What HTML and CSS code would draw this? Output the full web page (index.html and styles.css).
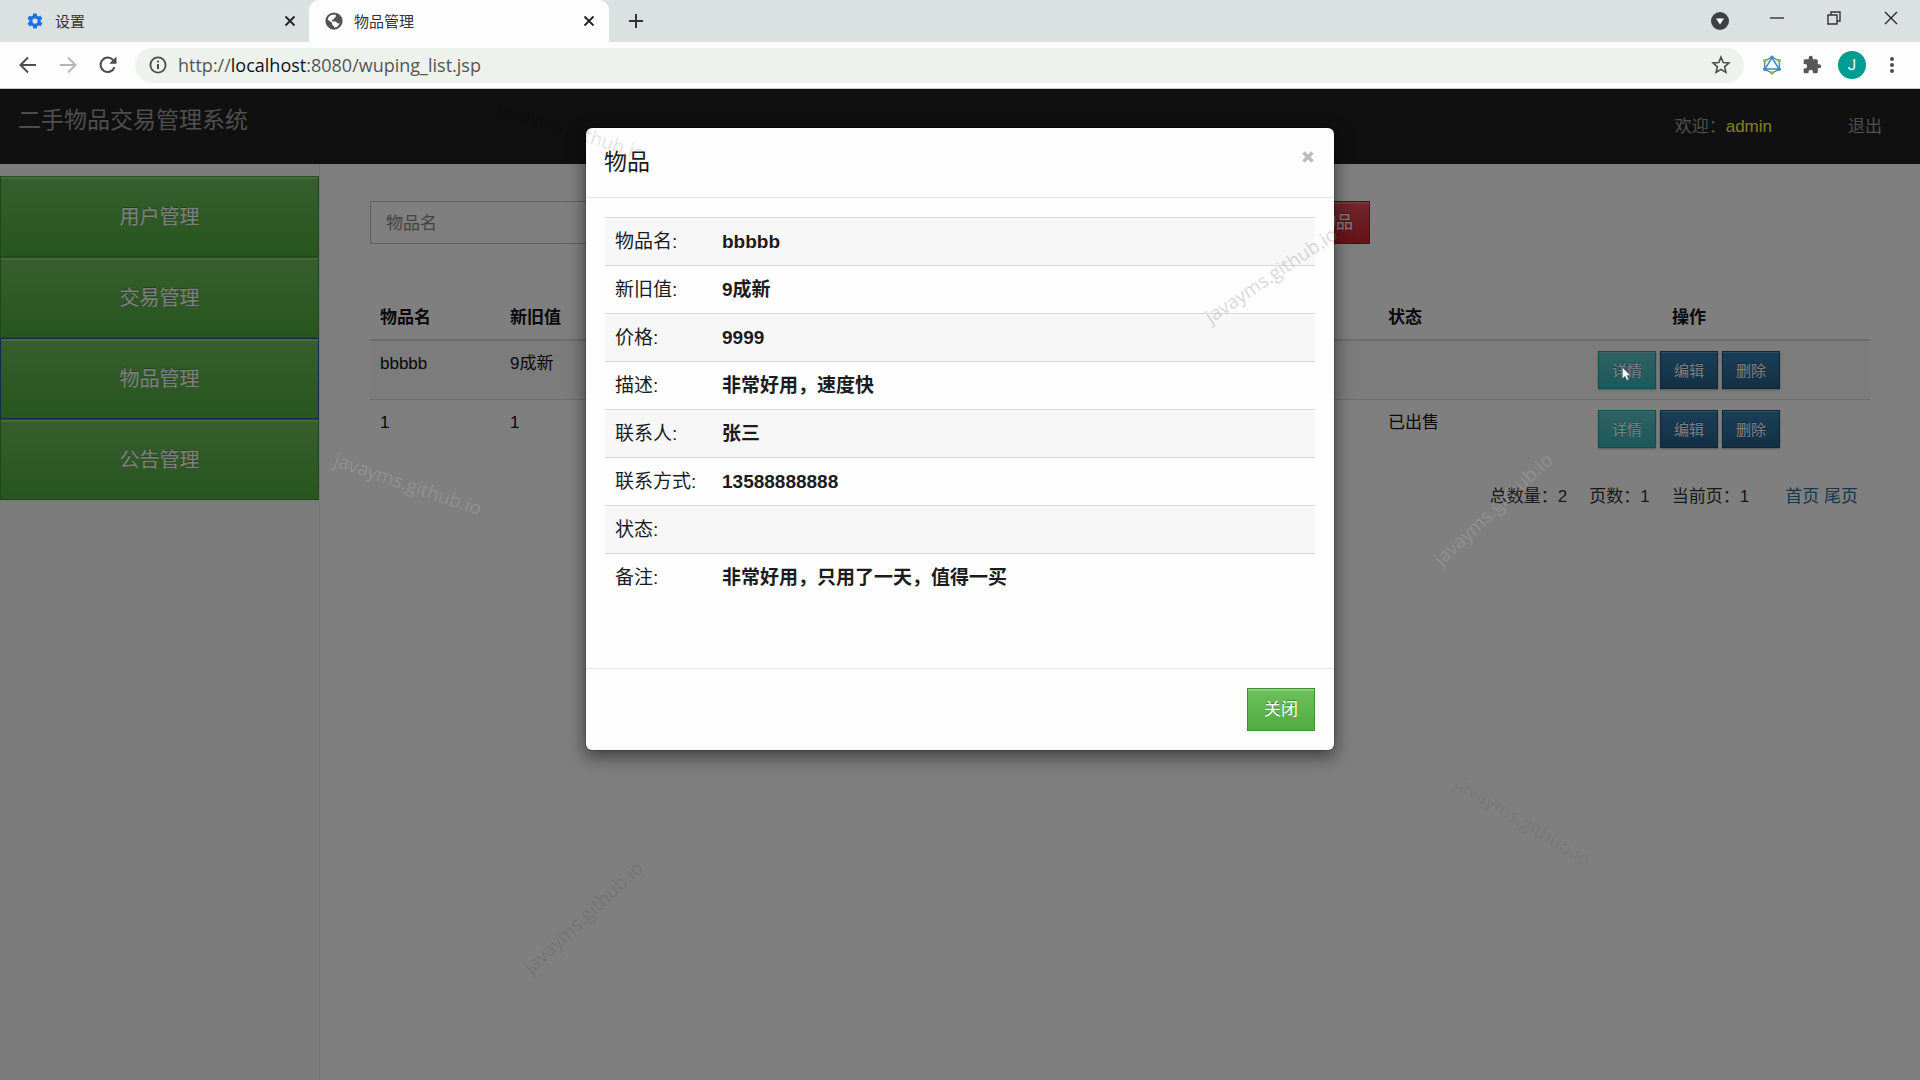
FILE: index.html
```
<!DOCTYPE html>
<html lang="zh-CN">
<head>
<meta charset="utf-8">
<meta name="viewport" content="width=device-width, initial-scale=1">
<title>物品管理</title>
<link rel="stylesheet" href="styles.css">
</head>
<body>
<header class="browser">
  <div class="tabstrip">
    <div class="tab">
      <svg class="tab-icon" viewBox="0 0 24 24" fill="#1a73e8"><path d="M19.4 13c0-.3.1-.6.1-1s0-.7-.1-1l2.100-1.600c.2-.2.2-.4.1-.6l-2-3.500c-.1-.2-.4-.3-.6-.2l-2.500 1c-.5-.4-1.100-.7-1.700-1l-.4-2.600c0-.2-.2-.4-.5-.4h-4c-.2 0-.5.2-.5.4l-.4 2.600c-.6.300-1.200.6-1.700 1l-2.500-1c-.2-.1-.5 0-.6.2l-2 3.500c-.1.200-.1.500.1.600L4.500 11c0 .3-.1.600-.1 1s0 .7.100 1l-2.100 1.600c-.2.200-.2.400-.1.600l2 3.500c.1.200.400.300.6.200l2.500-1c.5.400 1.100.700 1.700 1l.4 2.600c0 .2.200.400.5.400h4c.2 0 .5-.2.5-.4l.4-2.600c.6-.300 1.200-.6 1.700-1l2.500 1c.2.100.5 0 .6-.2l2-3.500c.1-.2.100-.5-.1-.6L19.400 13zM12 15.500a3.500 3.500 0 1 1 0-7 3.500 3.500 0 0 1 0 7z"/></svg>
      <span class="tab-title">设置</span>
      <button class="tab-close" aria-label="关闭标签页"><svg viewBox="0 0 12 12" width="12" height="12"><path d="M1.500 1.500l9 9M10.500 1.500l-9 9" stroke="#222" stroke-width="1.800"/></svg></button>
    </div>
    <div class="tab tab-active">
      <svg class="tab-icon" viewBox="0 0 24 24"><circle cx="12" cy="12" r="11.500" fill="#505355"/><path d="M10 3.500h4.500v2.200c0 1.500-1.200 2.300-2.500 2.300v2H9.500v2.500h4c1.500 0 2.500 1 2.500 2.500h3.500c-1 3.500-4 5.800-7.500 5.800v-2.300c-1.500 0-2.500-1-2.500-2.500v-1.500L3.500 10C4.300 6.500 7 4 10 3.500z" fill="#fdfdfd"/></svg>
      <span class="tab-title">物品管理</span>
      <button class="tab-close" aria-label="关闭标签页"><svg viewBox="0 0 12 12" width="12" height="12"><path d="M1.500 1.500l9 9M10.500 1.500l-9 9" stroke="#222" stroke-width="1.800"/></svg></button>
    </div>
    <button class="new-tab" aria-label="新标签页"><svg viewBox="0 0 16 16" width="16" height="16"><path d="M8 1v14M1 8h14" stroke="#333" stroke-width="2"/></svg></button>
    <div class="window-controls">
      <button class="tab-search" aria-label="搜索标签页"><svg viewBox="0 0 18 18" width="18" height="18"><circle cx="9" cy="9" r="9" fill="#3c4043"/><path d="M5 6.500h8L9 12.500z" fill="#fff"/></svg></button>
      <button aria-label="最小化"><svg viewBox="0 0 14 14" width="14" height="14"><path d="M0 7h14" stroke="#333" stroke-width="1.400"/></svg></button>
      <button aria-label="还原"><svg viewBox="0 0 14 14" width="14" height="14" fill="none" stroke="#333" stroke-width="1.400"><path d="M1 4h9v9H1zM4 4V1h9v9h-3"/></svg></button>
      <button aria-label="关闭窗口"><svg viewBox="0 0 14 14" width="14" height="14"><path d="M1 1l12 12M13 1L1 13" stroke="#222" stroke-width="1.300"/></svg></button>
    </div>
  </div>
  <div class="toolbar">
    <div class="nav-buttons">
      <button aria-label="后退"><svg viewBox="0 0 20 20" width="20" height="20" fill="none" stroke="#4a4d50" stroke-width="2"><path d="M18 10H3M10 2.500L2.500 10l7.500 7.500"/></svg></button>
      <button aria-label="前进"><svg viewBox="0 0 20 20" width="20" height="20" fill="none" stroke="#b4b6b8" stroke-width="2"><path d="M2 10h15M10 2.500l7.500 7.500-7.500 7.500"/></svg></button>
      <button aria-label="重新加载"><svg viewBox="0 0 20 20" width="20" height="20"><path d="M16.500 12.200A7.200 7.200 0 1 1 15 4.900l1.800 1.800" fill="none" stroke="#4a4d50" stroke-width="2"/><path d="M18.500 1.500v7.300h-7.300z" fill="#4a4d50"/></svg></button>
    </div>
    <div class="omnibox">
      <svg viewBox="0 0 18 18" width="18" height="18"><circle cx="9" cy="9" r="7.600" fill="none" stroke="#4a4d50" stroke-width="1.800"/><path d="M9 8v5M9 4.800v1.800" stroke="#4a4d50" stroke-width="2"/></svg>
      <span class="url">http://<span class="url-host">localhost</span>:8080/wuping_list.jsp</span>
      <button aria-label="收藏"><svg viewBox="0 0 20 20" width="20" height="20"><path d="M10 2.200l2.200 5.300 5.700.5-4.300 3.800 1.300 5.600L10 14.400l-4.900 3 1.300-5.600L2.100 8l5.700-.5z" fill="none" stroke="#4a4d50" stroke-width="1.600"/></svg></button>
    </div>
    <div class="extensions">
      <button aria-label="扩展"><svg viewBox="0 0 20 20" width="20" height="20"><path d="M10 2l7.300 4v8.200L10 18l-7.300-3.800V6z" fill="none" stroke="#666" stroke-width="1.200"/><path d="M10 2.500L17 14H3z" fill="none" stroke="#2b8fd0" stroke-width="1.500"/><g fill="#2b8fd0"><circle cx="10" cy="2" r="1.600"/><circle cx="2.800" cy="14.200" r="1.800"/><circle cx="17.200" cy="14.200" r="1.800"/></g><g fill="#76c043"><circle cx="2.800" cy="5.800" r="1.800"/><circle cx="17.200" cy="5.800" r="1.800"/><circle cx="10" cy="18" r="1.800"/></g></svg></button>
      <button aria-label="扩展程序"><svg viewBox="0 0 24 24" width="20" height="20" fill="#54585b"><path d="M20.500 11H19V7a2 2 0 0 0-2-2h-4V3.500a2.500 2.500 0 0 0-5 0V5H4a2 2 0 0 0-2 2v3.800h1.500a2.700 2.700 0 0 1 0 5.400H2V20c0 1.100.9 2 2 2h3.800v-1.500a2.700 2.700 0 0 1 5.400 0V22H17a2 2 0 0 0 2-2v-4h1.500a2.500 2.500 0 0 0 0-5z"/></svg></button>
      <button class="avatar" aria-label="用户">J</button>
      <button aria-label="更多"><svg viewBox="0 0 4 18" width="4" height="18" fill="#4a4d50"><circle cx="2" cy="3" r="2"/><circle cx="2" cy="9" r="2"/><circle cx="2" cy="15" r="2"/></svg></button>
    </div>
  </div>
</header>

<div class="page">
  <nav class="navbar">
    <a class="brand" href="#">二手物品交易管理系统</a>
    <div class="nav-right">
      <span>欢迎：<span class="user">admin</span></span>
      <a href="#">退出</a>
    </div>
  </nav>
  <div class="content">
    <aside class="sidebar">
      <button class="menu-btn">用户管理</button>
      <button class="menu-btn">交易管理</button>
      <button class="menu-btn menu-current">物品管理</button>
      <button class="menu-btn">公告管理</button>
    </aside>
    <main class="main">
      <form class="search">
        <input class="search-input" type="text" placeholder="物品名" aria-label="物品名">
        <button class="btn btn-danger" type="button">添加物品</button>
      </form>
      <table class="items">
        <colgroup><col class="c-name"><col class="c-name"><col><col class="c-name"><col class="c-ops"></colgroup>
        <thead><tr><th>物品名</th><th>新旧值</th><th></th><th>状态</th><th class="ops">操作</th></tr></thead>
        <tbody>
          <tr><td>bbbbb</td><td>9成新</td><td></td><td></td><td class="ops"><div class="ops-row"><button class="btn-sm btn-info">详情</button><button class="btn-sm btn-primary">编辑</button><button class="btn-sm btn-primary">删除</button></div></td></tr>
          <tr><td>1</td><td>1</td><td></td><td>已出售</td><td class="ops"><div class="ops-row"><button class="btn-sm btn-info">详情</button><button class="btn-sm btn-primary">编辑</button><button class="btn-sm btn-primary">删除</button></div></td></tr>
        </tbody>
      </table>
      <div class="pager">
        <span>总数量：2</span><span>页数：1</span><span>当前页：1</span>
        <span class="pager-links"><a href="#">首页</a> <a href="#">尾页</a></span>
      </div>
    </main>
  </div>

  <div class="overlay">
    <div class="modal" role="dialog" aria-labelledby="modal-title">
      <div class="modal-head">
        <h4 id="modal-title">物品</h4>
        <button class="modal-x" aria-label="关闭"><svg viewBox="0 0 12 12" width="12" height="12"><path d="M1.500 1.500l9 9M10.500 1.500l-9 9" stroke="#bdbdbd" stroke-width="3.400"/></svg></button>
      </div>
      <div class="modal-body">
        <table class="detail">
          <tr><td>物品名:</td><th>bbbbb</th></tr>
          <tr><td>新旧值:</td><th>9成新</th></tr>
          <tr><td>价格:</td><th>9999</th></tr>
          <tr><td>描述:</td><th>非常好用，速度快</th></tr>
          <tr><td>联系人:</td><th>张三</th></tr>
          <tr><td>联系方式:</td><th>13588888888</th></tr>
          <tr><td>状态:</td><th></th></tr>
          <tr><td>备注:</td><th>非常好用，只用了一天，值得一买</th></tr>
        </table>
      </div>
      <div class="modal-foot"><button class="btn btn-success">关闭</button></div>
    </div>
  </div>
</div>

<div class="marks">
  <span class="mark mark-a">javayms.github.io</span>
  <span class="mark mark-b">javayms.github.io</span>
  <span class="mark mark-c">javayms.github.io</span>
  <span class="mark mark-d">javayms.github.io</span>
  <span class="mark mark-e">javayms.github.io</span>
  <span class="mark mark-f">javayms.github.io</span>
  <svg class="pointer" viewBox="0 0 9 14" width="9" height="14"><path d="M.5.500v11l2.600-2.300 1.800 4.100 1.900-.8-1.800-4h3.500z" fill="#fff" stroke="#555" stroke-width=".5"/></svg>
</div>
</body>
</html>
```
FILE: styles.css
```
* { box-sizing: border-box; }

body {
  margin: 0;
  min-height: 100vh;
  display: flex;
  flex-direction: column;
  position: relative;
  font: 17px/25px "Liberation Sans", "Noto Sans CJK SC", sans-serif;
  color: #333;
}

button { font: inherit; margin: 0; padding: 0; border: 0; background: none; }
a { color: #2a709f; text-decoration: none; }
svg { display: block; }

/* browser chrome */
.browser { font-family: "Open Sans", "Noto Sans CJK SC", sans-serif; border-bottom: 1px solid #c8caca; }
.tabstrip { display: flex; height: 42px; background: #dbe0e0; }
.tab { display: flex; align-items: center; width: 309px; padding: 0 13px 0 26px; }
.tab-active { width: 300px; padding: 0 14px 0 16px; background: #fdfdfd; border-radius: 10px 10px 0 0; }
.tab-icon { width: 18px; height: 18px; }
.tab-title { flex: 1; margin-left: 11px; padding-top: 1px; font-size: 15px; color: #333; }
.new-tab { padding: 0 19px; }
.window-controls { display: flex; align-items: center; gap: 43px; margin-left: auto; padding: 0 22px 6px 0; }
.tab-search { margin-right: -2px; padding-top: 5px; }
.toolbar { display: flex; align-items: center; height: 46px; padding: 0 26px 0 18px; background: #fdfdfd; }
.nav-buttons { display: flex; gap: 20px; width: 117px; }
.omnibox { display: flex; align-items: center; flex: 1; height: 35px; padding: 0 13px 0 14px; border-radius: 18px; background: #edf2ed; }
.url { flex: 1; margin-left: 11px; font-size: 18px; color: #555; }
.url-host { color: #111; }
.extensions { display: flex; align-items: center; gap: 20px; margin-left: 18px; }
.extensions .avatar { width: 28px; height: 28px; margin: 0 4px 0 -4px; border-radius: 50%; background: #009b91; color: #fff; font: 15px/28px Roboto, sans-serif; text-align: center; }

/* application */
.page { position: relative; flex: 1; display: flex; flex-direction: column; background: #fff; }
.navbar { display: flex; justify-content: space-between; height: 75px; padding: 0 38px 12px 18px; background: #212121; color: #9d9d9d; align-items: center; }
.navbar a { color: #9d9d9d; }
.navbar .brand { font-size: 23px; }
.nav-right { display: flex; gap: 76px; padding-top: 12px; }
.user { color: #ffff38; }
.content { flex: 1; display: flex; }
.sidebar { width: 16.667%; padding-top: 12px; background: #f6f6f6; border-right: 1px solid #ececec; }
.menu-btn {
  display: block; width: 100%; height: 81px; padding-top: 2px;
  border: 1px solid #3e8f32; border-top-color: #4aa23d;
  background: linear-gradient(#6dbe5c, #50aa40);
  box-shadow: inset 0 2px 0 rgba(255, 255, 255, .25);
  color: #fff; font-size: 20px; text-shadow: 0 -1px 0 rgba(0, 0, 0, .3);
}
.menu-current { border-color: #255a96; }
.main { flex: 1; padding: 37px 50px; }
.search { display: flex; justify-content: space-between; width: 66.667%; margin-bottom: 51px; }
.search-input { width: 50%; height: 43px; padding: 2px 15px 0; border: 1px solid #c0c0c0; background: #fff; font: inherit; }
.search-input::placeholder { color: #888; opacity: 1; }
.btn { height: 43px; padding: 0 16px; border: 1px solid; color: #fff; text-shadow: 0 -1px 0 rgba(0, 0, 0, .3); box-shadow: inset 0 2px 0 rgba(255, 255, 255, .2); }
.btn-danger { background: linear-gradient(#e0505c, #cc2430); border-color: #a01c26; }
.btn-success { background: linear-gradient(#6dc05c, #51ac40); border-color: #3f8f33; }

.items, .detail { width: 100%; border-collapse: collapse; }
.items { table-layout: fixed; color: #111; }
.c-name { width: 130px; }
.c-ops { width: 362px; }
.items th { padding: 10px 10px 9px; border-bottom: 2px solid #ddd; text-align: left; }
.items td { height: 59px; padding: 10px; border-top: 1px solid #ddd; vertical-align: top; }
.items tbody tr:first-child { background: #f9f9f9; }
.items .ops { text-align: center; }
.ops-row { display: flex; justify-content: center; gap: 4px; }
.btn-sm { width: 58px; height: 38px; border: 1px solid; color: #fff; font-size: 15px; text-shadow: 0 -1px 0 rgba(0, 0, 0, .3); box-shadow: inset 0 1px 0 rgba(255, 255, 255, .2), 0 1px 2px rgba(0, 0, 0, .3); }
.btn-info { background: linear-gradient(#60c4c8, #38b2b8); border-color: #2a9da2; }
.btn-primary { background: linear-gradient(#3280b0, #285f88); border-color: #1f5078; }
.pager { display: flex; justify-content: flex-end; gap: 22px; padding: 25px 12px 0; }
.pager-links { margin-left: 14px; }

/* dialog */
.overlay { position: absolute; inset: 0; padding: 38px 20px; background: rgba(0, 0, 0, .5); }
.modal { max-width: 750px; margin: 0 auto; border: 1px solid rgba(0, 0, 0, .2); border-radius: 7px; background: #fdfdfd; background-clip: padding-box; box-shadow: 0 6px 18px rgba(0, 0, 0, .5); color: #1c1c1c; font-size: 19px; }
.modal-head { display: flex; justify-content: space-between; padding: 19px 20px 20px 18px; border-bottom: 1px solid #e5e5e5; }
.modal-head h4 { margin: 0; font-size: 23px; font-weight: 400; line-height: 30px; }
.modal-x { height: 20px; }
.modal-body { padding: 19px 19px 66px; }
.detail tr { border-top: 1px solid #d8d8d8; }
.detail tr:nth-child(odd) { background: #f7f7f7; }
.detail td { width: 107px; height: 48px; padding: 0 10px; white-space: nowrap; }
.detail th { padding: 0 10px; text-align: left; }
.modal-foot { display: flex; justify-content: flex-end; padding: 19px; border-top: 1px solid #e5e5e5; }
.modal-foot .btn { font-size: 17px; }

/* watermark and pointer lie over everything */
.marks { position: absolute; inset: 0; overflow: hidden; pointer-events: none; }
.mark { position: absolute; width: 160px; text-align: center; font: 19px/26px "Open Sans", sans-serif; }
.mark-a { left: 491px; top: 117px; color: rgba(0, 0, 0, .12); transform: rotate(18deg); }
.mark-b { left: 1191px; top: 262px; color: rgba(128, 128, 128, .3); transform: rotate(-34deg); }
.mark-c { left: 328px; top: 471px; color: rgba(255, 255, 255, .14); transform: rotate(19deg); }
.mark-d { left: 1413px; top: 496px; color: rgba(255, 255, 255, .14); transform: rotate(-43deg); }
.mark-e { left: 503px; top: 904px; color: rgba(0, 0, 0, .1); transform: rotate(-43deg); }
.mark-f { left: 1443px; top: 808px; color: rgba(0, 0, 0, .07); transform: rotate(31deg); }
.pointer { position: absolute; left: 1622px; top: 367px; }
```
